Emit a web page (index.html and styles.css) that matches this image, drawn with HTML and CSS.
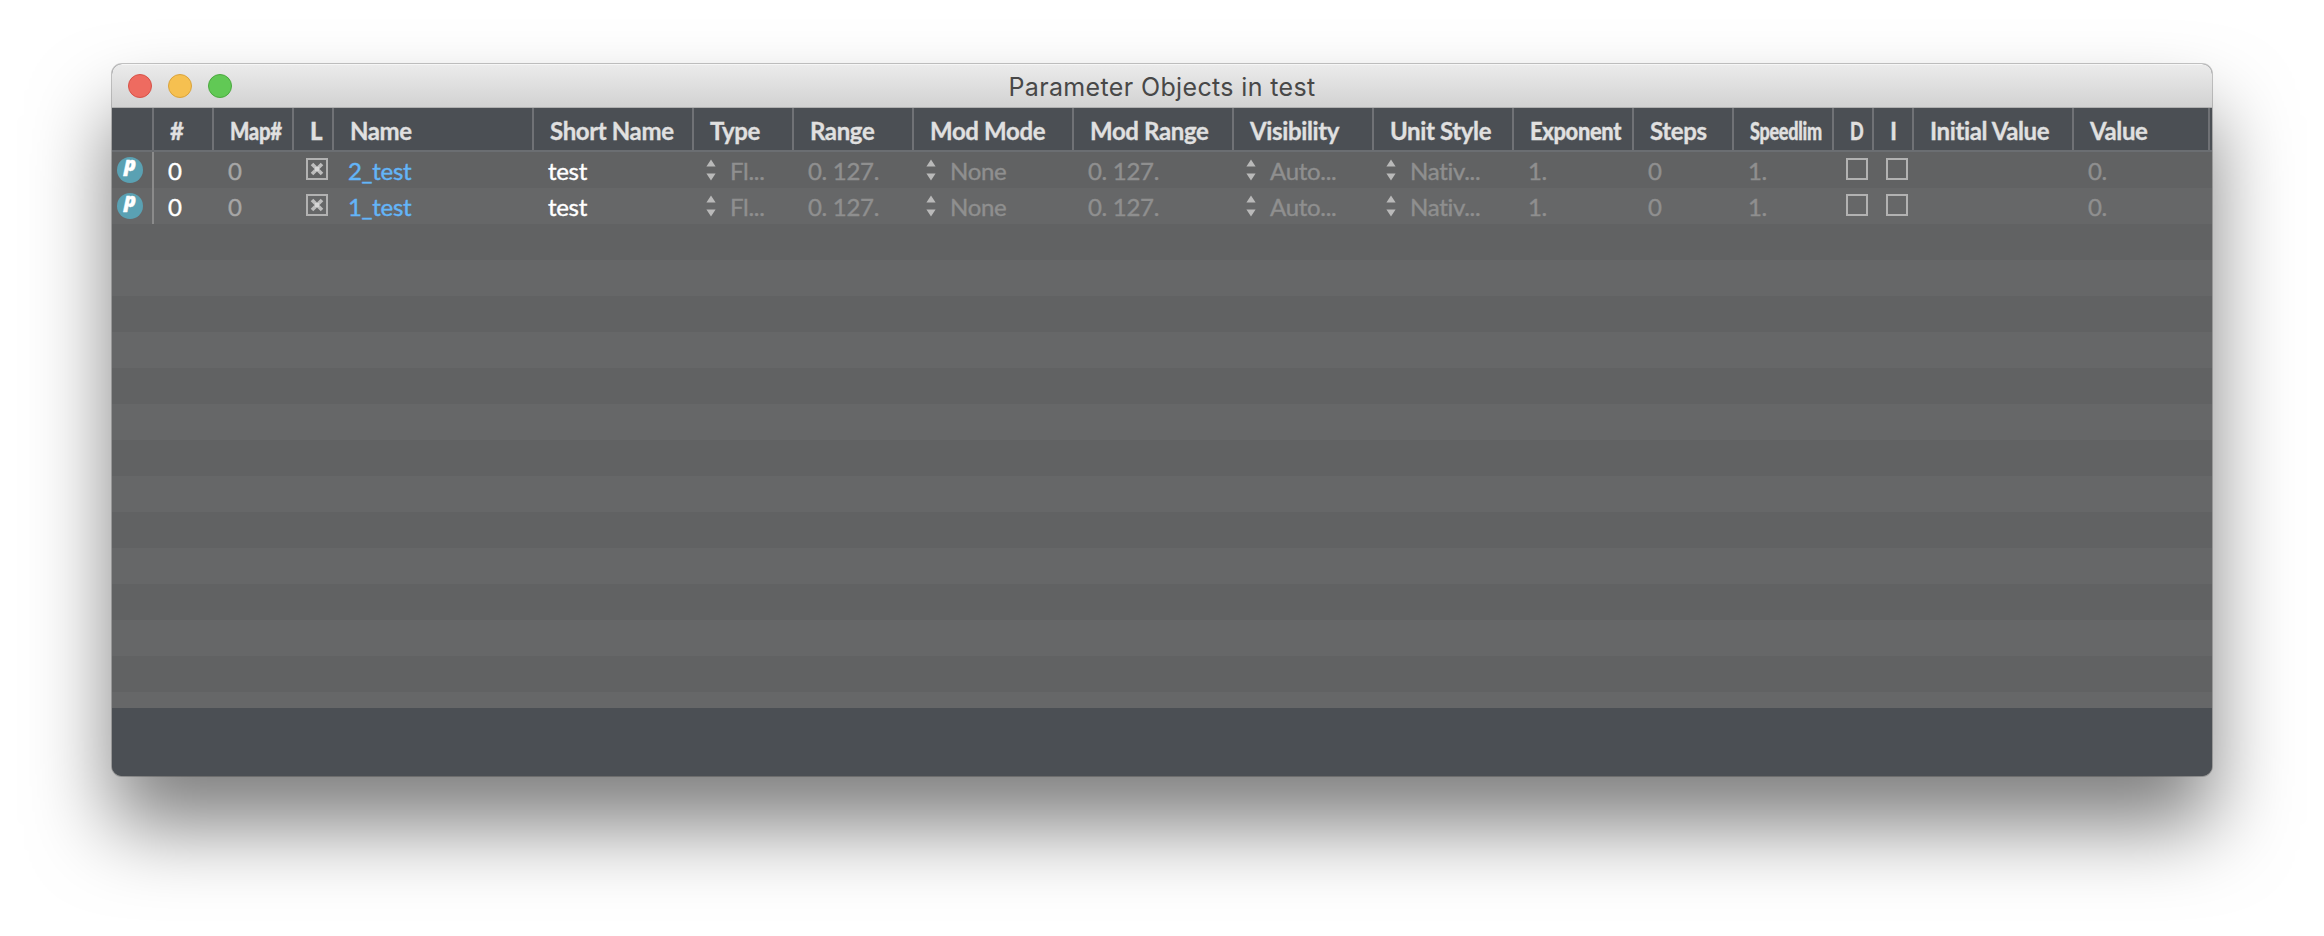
FILE: index.html
```
<!DOCTYPE html>
<html lang="en">
<head>
<meta charset="utf-8">
<title>Parameter Objects in test</title>
<link rel="stylesheet" href="styles.css">
</head>
<body>
<svg class="defs" width="0" height="0">
  <symbol id="arrows" viewBox="0 0 10 22">
    <path d="M.4 7.6 5 .4 9.6 7.6ZM.4 14.4 5 21.6 9.6 14.4Z" fill="#b9b9b9"/>
  </symbol>
  <symbol id="cross" viewBox="0 0 14 14">
    <path d="M2 2 12 12M12 2 2 12" stroke="#bdbdbd" stroke-width="3.6"/>
    <rect x="5" y="5" width="4" height="4" fill="#d6d6d6"/>
  </symbol>
</svg>
<main class="window">
  <header class="titlebar">
    <div class="lights"><i class="light close"></i><i class="light minimize"></i><i class="light zoom"></i></div>
    <h1 class="title">Parameter Objects in test</h1>
  </header>
  <div class="columns head">
    <span></span><span>#</span><span><b class="map">Map#</b></span><span><b class="l">L</b></span><span>Name</span><span>Short Name</span><span>Type</span><span>Range</span><span>Mod Mode</span><span>Mod Range</span><span>Visibility</span><span>Unit Style</span><span><b class="exponent">Exponent</b></span><span>Steps</span><span><b class="speedlim">Speedlim</b></span><span><b class="d">D</b></span><span>I</span><span>Initial Value</span><span>Value</span>
  </div>
  <section class="body">
    <div class="columns row">
      <span class="kind"><i class="badge">p</i></span><span class="on">0</span><span class="map-value">0</span><span class="check"><i class="box"><svg class="cross"><use href="#cross"/></svg></i></span><span class="link">2_test</span><span class="on">test</span><span class="menu"><svg class="arrows"><use href="#arrows"/></svg>Fl...</span><span>0. 127.</span><span class="menu"><svg class="arrows"><use href="#arrows"/></svg>None</span><span>0. 127.</span><span class="menu"><svg class="arrows"><use href="#arrows"/></svg>Auto...</span><span class="menu"><svg class="arrows"><use href="#arrows"/></svg>Nativ...</span><span>1.</span><span>0</span><span>1.</span><span class="check"><i class="box"></i></span><span class="check"><i class="box"></i></span><span></span><span>0.</span>
    </div>
    <div class="columns row">
      <span class="kind"><i class="badge">p</i></span><span class="on">0</span><span class="map-value">0</span><span class="check"><i class="box"><svg class="cross"><use href="#cross"/></svg></i></span><span class="link">1_test</span><span class="on">test</span><span class="menu"><svg class="arrows"><use href="#arrows"/></svg>Fl...</span><span>0. 127.</span><span class="menu"><svg class="arrows"><use href="#arrows"/></svg>None</span><span>0. 127.</span><span class="menu"><svg class="arrows"><use href="#arrows"/></svg>Auto...</span><span class="menu"><svg class="arrows"><use href="#arrows"/></svg>Nativ...</span><span>1.</span><span>0</span><span>1.</span><span class="check"><i class="box"></i></span><span class="check"><i class="box"></i></span><span></span><span>0.</span>
    </div>
  </section>
  <footer class="footer"></footer>
</main>
</body>
</html>
```
FILE: styles.css
```
* { box-sizing: border-box; }
body { margin: 0; height: 936px; padding: 64px 112px 0; background: #fff; overflow: hidden; font-family: Lato, sans-serif; }
.defs { position: absolute; }
.window { width: 2100px; height: 712px; display: flex; flex-direction: column; border-radius: 10px; overflow: hidden; background: #4b4f54; box-shadow: 0 0 0 1px rgba(0,0,0,.22), 0 50px 80px rgba(0,0,0,.5); }
.titlebar { flex: none; height: 44px; display: grid; grid-template-columns: 1fr auto 1fr; align-items: center; padding-left: 16px; padding-right: 16px; background: linear-gradient(#ebebeb, #d2d2d2); border-top: 1px solid #f6f6f6; border-bottom: 1px solid #b0b0b0; }
.lights { display: flex; gap: 16px; }
.light { width: 24px; height: 24px; border-radius: 50%; border: 1px solid; }
.close { background: #ee6b60; border-color: #d65248; }
.minimize { background: #f6c050; border-color: #d9a33c; }
.zoom { background: #61c955; border-color: #4ba83f; }
.title { margin: 0; padding-top: 2px; font: 400 25px/40px Inter, sans-serif; color: #484848; letter-spacing: .36px; }
.columns { display: grid; grid-template-columns: 42px 60px 80px 40px 200px 160px 100px 120px 160px 160px 140px 140px 120px 100px 100px 40px 40px 160px 136px; }
.head { flex: none; height: 44px; border-bottom: 2px solid #6b6e72; background: #4b4f54; color: #e0e0e0; font-size: 24px; font-weight: 700; line-height: 46px; letter-spacing: -.37px; white-space: nowrap; -webkit-text-stroke: .3px; }
.head span { height: 42px; padding-left: 16px; border-right: 2px solid #707276; }
.head b { display: inline-block; transform-origin: 0 50%; }
.map { transform: scaleX(.85); }
.exponent { transform: scaleX(.91); }
.speedlim { transform: scaleX(.75); }
.d { transform: scaleX(.75); }
.body { flex: none; height: 556px; background: repeating-linear-gradient(#616263 0 36px, #666768 36px 72px); }
.row { height: 36px; font-size: 24px; line-height: 38px; letter-spacing: -.3px; color: #8f8f8f; white-space: nowrap; -webkit-text-stroke: .4px; }
.row > span { height: 36px; padding-left: 14px; }
.row > .kind { padding: 5px 0 0 5px; border-right: 2px solid #8b8b8b; line-height: 0; }
.badge { display: block; width: 26px; height: 26px; border-radius: 50%; padding-left: 7px; background: #5aa1b3; color: #fff; font: italic 800 20px/14px "Open Sans", sans-serif; }
.row .on { color: #fff; }
.row .link { color: #63b5f8; }
.row .map-value { color: #a6a6a6; }
.row > .check { padding: 6px 0 0 12px; }
.box { width: 22px; height: 22px; display: grid; place-items: center; border: 2px solid #b2b2b2; }
.cross { width: 14px; height: 14px; }
.row > .menu { display: flex; gap: 14px; padding-left: 12px; }
.arrows { width: 10px; height: 22px; margin-top: 7px; }
.footer { flex: 1; background: #4b4f54; }
```
